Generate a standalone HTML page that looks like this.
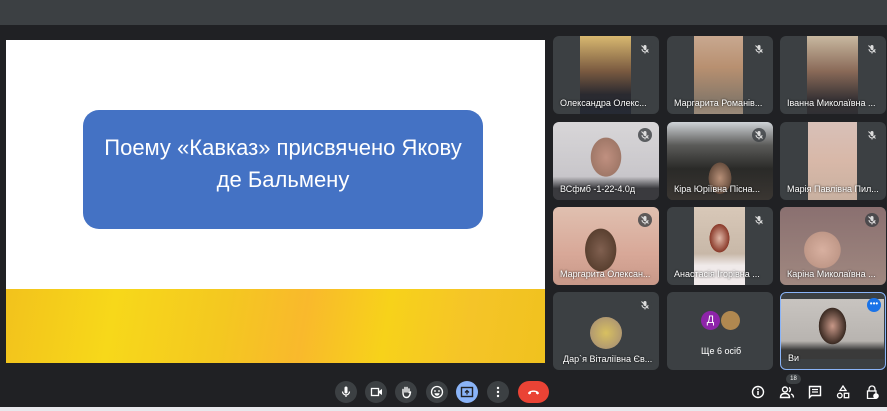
<!DOCTYPE html>
<html><head><meta charset="utf-8"><style>
*{margin:0;padding:0;box-sizing:border-box}
body{width:887px;height:411px;background:#202124;position:relative;overflow:hidden;font-family:"Liberation Sans","DejaVu Sans",sans-serif}
.top{position:absolute;left:0;top:0;width:887px;height:25px;background:#3c4043}
.slide{position:absolute;left:6px;top:40px;width:539px;height:249px;background:#fff}
.yel{position:absolute;left:6px;top:289px;width:539px;height:74px;background:linear-gradient(100deg,#f2c21c 0%,#f7d81a 20%,#f4c820 40%,#f9b92c 55%,#f7d21a 70%,#f5c428 85%,#f0c21e 100%)}
.box{position:absolute;left:83px;top:110px;width:400px;height:119px;background:#4472c4;border-radius:16px;color:#fff;font-size:22px;line-height:32px;text-align:center;padding-top:22px}
.tile{position:absolute;width:106px;height:78px;background:#3c4043;border-radius:6px;overflow:hidden}
.vid{position:absolute;top:0;height:100%}
.name{position:absolute;left:7px;bottom:6px;color:#fff;font-size:9px;white-space:nowrap;text-shadow:0 0 2px #000}
.mic{position:absolute;right:7px;top:6px;width:14px;height:14px;border-radius:7px;background:rgba(60,64,67,.8)}
.mic svg{display:block}
.btn{position:absolute;top:381px;width:22px;height:22px;border-radius:11px;background:#3c4043}
.btn svg,.ic svg{display:block}
.ic{position:absolute;top:385px;width:14px;height:14px}
.bottom{position:absolute;left:0;top:407px;width:887px;height:4px;background:#e8e8ec}
</style></head><body>
<div class="top"></div>
<div class="slide"></div>
<div class="yel"></div>
<div class="box">Поему «Кавказ» присвячено Якову<br>де Бальмену</div>

<svg width="0" height="0" style="position:absolute"><defs><symbol id="m" viewBox="0 0 14 14"><rect x="5.5" y="3" width="3" height="5" rx="1.5" fill="#ddd"/><path d="M4 7a3 3 0 0 0 6 0M7 10v1.5M3.5 3.5l7 7" stroke="#ddd" stroke-width="1" fill="none"/></symbol></defs></svg>

<div class="tile" style="left:553px;top:36px"><div class="vid" style="left:27px;width:51px;background:linear-gradient(#d8b870 0%,#7a5a40 45%,#2a2a30 75%,#262a34 100%)"></div><div class="mic"><svg width="14" height="14"><use href="#m"/></svg></div><div class="name">Олександра Олекс...</div></div>
<div class="tile" style="left:667px;top:36px"><div class="vid" style="left:27px;width:49px;background:linear-gradient(#c8a890 0%,#b89070 40%,#8a7a6a 80%,#9a8a7a 100%)"></div><div class="mic"><svg width="14" height="14"><use href="#m"/></svg></div><div class="name">Маргарита Романів...</div></div>
<div class="tile" style="left:780px;top:36px"><div class="vid" style="left:27px;width:51px;background:linear-gradient(#c8b8a0 0%,#8a6a58 45%,#3a3436 80%,#303034 100%)"></div><div class="mic"><svg width="14" height="14"><use href="#m"/></svg></div><div class="name">Іванна Миколаївна ...</div></div>

<div class="tile" style="left:553px;top:122px"><div class="vid" style="left:0;width:106px;background:radial-gradient(ellipse 25px 32px at 50% 45%,#c09080 0%,#a07868 60%,transparent 62%),linear-gradient(#d8d6d8,#c8c6ca 70%,#3a3a3e 85%)"></div><div class="mic"><svg width="14" height="14"><use href="#m"/></svg></div><div class="name">ВСфмб -1-22-4.0д</div></div>
<div class="tile" style="left:667px;top:122px"><div class="vid" style="left:0;width:106px;background:radial-gradient(ellipse 16px 22px at 50% 72%,#b89078 0%,#6a5040 70%,transparent 72%),linear-gradient(#d0d4d8 0%,#5a5a58 30%,#2a2a28 60%,#3a3632 100%)"></div><div class="mic"><svg width="14" height="14"><use href="#m"/></svg></div><div class="name">Кіра Юріївна Пісна...</div></div>
<div class="tile" style="left:780px;top:122px"><div class="vid" style="left:28px;width:49px;background:linear-gradient(#d8c0b8,#d8b8a8 50%,#c8b0a0 100%)"></div><div class="mic"><svg width="14" height="14"><use href="#m"/></svg></div><div class="name">Марія Павлівна Пил...</div></div>

<div class="tile" style="left:553px;top:207px"><div class="vid" style="left:0;width:106px;background:radial-gradient(ellipse 22px 30px at 45% 55%,#806050 0%,#5a4030 70%,transparent 72%),linear-gradient(#e0c0b0,#d8a898 60%,#c89888)"></div><div class="mic"><svg width="14" height="14"><use href="#m"/></svg></div><div class="name">Маргарита Олексан...</div></div>
<div class="tile" style="left:667px;top:207px"><div class="vid" style="left:27px;width:51px;background:radial-gradient(ellipse 14px 20px at 50% 40%,#e0b8a8 0%,#8a3a2a 70%,transparent 72%),linear-gradient(#d8c8b8,#c8b8a8 60%,#f0eaea 75%)"></div><div class="mic"><svg width="14" height="14"><use href="#m"/></svg></div><div class="name">Анастасія Ігорівна ...</div></div>
<div class="tile" style="left:780px;top:207px"><div class="vid" style="left:0;width:106px;background:radial-gradient(ellipse 30px 30px at 40% 55%,#d8b0a0 0%,#c09888 60%,transparent 62%),linear-gradient(#8a7070,#a08880)"></div><div class="mic"><svg width="14" height="14"><use href="#m"/></svg></div><div class="name">Каріна Миколаївна ...</div></div>

<div class="tile" style="left:553px;top:292px"><div class="mic"><svg width="14" height="14"><use href="#m"/></svg></div><div style="position:absolute;left:37px;top:25px;width:32px;height:32px;border-radius:16px;background:radial-gradient(#d8c060,#a08878)"></div><div class="name" style="left:10px">Дар`я Віталіївна Єв...</div></div>
<div class="tile" style="left:667px;top:292px"><div style="position:absolute;left:34px;top:19px;width:19px;height:19px;border-radius:10px;background:#8e24aa;color:#fff;font-size:11px;text-align:center;line-height:19px">Д</div><div style="position:absolute;left:54px;top:19px;width:19px;height:19px;border-radius:10px;background:#b08850"></div><div class="name" style="left:34px;bottom:14px;text-shadow:none">Ще 6 осіб</div></div>
<div class="tile" style="left:780px;top:292px;border:1.5px solid #8ab4f8;background:#3c4043"><div class="vid" style="left:0;top:6px;height:60px;width:103px;background:radial-gradient(ellipse 18px 24px at 50% 45%,#c89888 0%,#3a2a22 75%,transparent 77%),linear-gradient(#c8c4c0,#b8b4b0 70%,#3a3a3a 85%)"></div><div style="position:absolute;right:4px;top:5px;width:14px;height:14px;border-radius:7px;background:#1a73e8;color:#fff;font-size:8px;text-align:center;line-height:11px">•••</div><div class="name">Ви</div></div>

<div class="btn" style="left:335px"><svg width="22" height="22"><rect x="9.5" y="5.5" width="3" height="7" rx="1.5" fill="#fff"/><path d="M7.5 10.5a3.5 3.5 0 0 0 7 0M11 14v2" stroke="#fff" stroke-width="1.2" fill="none"/></svg></div>
<div class="btn" style="left:365px"><svg width="22" height="22"><rect x="6.5" y="7.5" width="7" height="7" fill="none" stroke="#fff" stroke-width="1.3"/><path d="M14 10l3-2v6l-3-2z" fill="#fff"/></svg></div>
<div class="btn" style="left:395px"><svg width="22" height="22"><path d="M8 12V8.5M10 11V6.5M12 11V6.5M14 11.5V8M8 12c0 3 1.5 4.5 3.5 4.5S15 15 15.5 11" stroke="#fff" stroke-width="1.4" fill="none" stroke-linecap="round"/></svg></div>
<div class="btn" style="left:426px"><svg width="22" height="22"><circle cx="11" cy="11" r="5.5" fill="none" stroke="#fff" stroke-width="1.3"/><circle cx="9" cy="10" r=".9" fill="#fff"/><circle cx="13" cy="10" r=".9" fill="#fff"/><path d="M8.5 12.2h5a2.5 2.5 0 0 1-5 0z" fill="#fff"/></svg></div>
<div class="btn" style="left:456px;background:#8ab4f8"><svg width="22" height="22"><rect x="5.5" y="6.5" width="11" height="9" fill="none" stroke="#202124" stroke-width="1.4"/><path d="M11 13.5V9.5M9 11.5l2-2 2 2" stroke="#202124" stroke-width="1.3" fill="none"/></svg></div>
<div class="btn" style="left:487px"><svg width="22" height="22"><circle cx="11" cy="7" r="1.2" fill="#fff"/><circle cx="11" cy="11" r="1.2" fill="#fff"/><circle cx="11" cy="15" r="1.2" fill="#fff"/></svg></div>
<div class="btn" style="left:518px;width:31px;background:#ea4335"><svg width="31" height="22"><path d="M10 12.5c0-2 3-3 5.5-3s5.5 1 5.5 3l-1.5 1-1.5-1v-1.2c-1.5-.5-3.5-.5-5 0v1.2l-1.5 1z" fill="#fff"/></svg></div>

<div style="position:absolute;left:786px;top:374px;width:15px;height:10px;border-radius:5px;background:#3c4043;color:#fff;font-size:6px;text-align:center;line-height:10px">18</div>
<div class="ic" style="left:751px"><svg width="14" height="14"><circle cx="7" cy="7" r="5.5" fill="none" stroke="#fff" stroke-width="1.4"/><path d="M7 6v4" stroke="#fff" stroke-width="1.5"/><circle cx="7" cy="4.2" r=".9" fill="#fff"/></svg></div>
<div class="ic" style="left:779px;width:16px"><svg width="16" height="14"><circle cx="6" cy="4.5" r="2.5" fill="none" stroke="#fff" stroke-width="1.4"/><path d="M1.5 12.5c0-3 2-4 4.5-4s4.5 1 4.5 4z" fill="none" stroke="#fff" stroke-width="1.4"/><path d="M10 2.5a2.3 2.3 0 0 1 0 4.2M12 9c1.5.5 2.5 1.5 2.5 3.5" stroke="#fff" stroke-width="1.4" fill="none"/></svg></div>
<div class="ic" style="left:808px"><svg width="14" height="14"><path d="M1.5 1.5h11v9h-9l-2 2z" fill="none" stroke="#fff" stroke-width="1.4"/><path d="M4 4.5h6M4 7h6" stroke="#fff" stroke-width="1.2"/></svg></div>
<div class="ic" style="left:836px"><svg width="14" height="14"><path d="M7 1l3 4.5H4z" fill="none" stroke="#fff" stroke-width="1.3"/><circle cx="3.8" cy="10.5" r="2.3" fill="none" stroke="#fff" stroke-width="1.3"/><rect x="8.3" y="8.3" width="4.4" height="4.4" fill="none" stroke="#fff" stroke-width="1.3"/></svg></div>
<div class="ic" style="left:865px"><svg width="14" height="14"><path d="M4 6V4a3 3 0 0 1 6 0v2" fill="none" stroke="#fff" stroke-width="1.3"/><rect x="2.5" y="6" width="8.5" height="7.5" fill="none" stroke="#fff" stroke-width="1.3"/><circle cx="11" cy="11" r="2.8" fill="#fff"/></svg></div>
<div class="bottom"></div>
</body></html>
